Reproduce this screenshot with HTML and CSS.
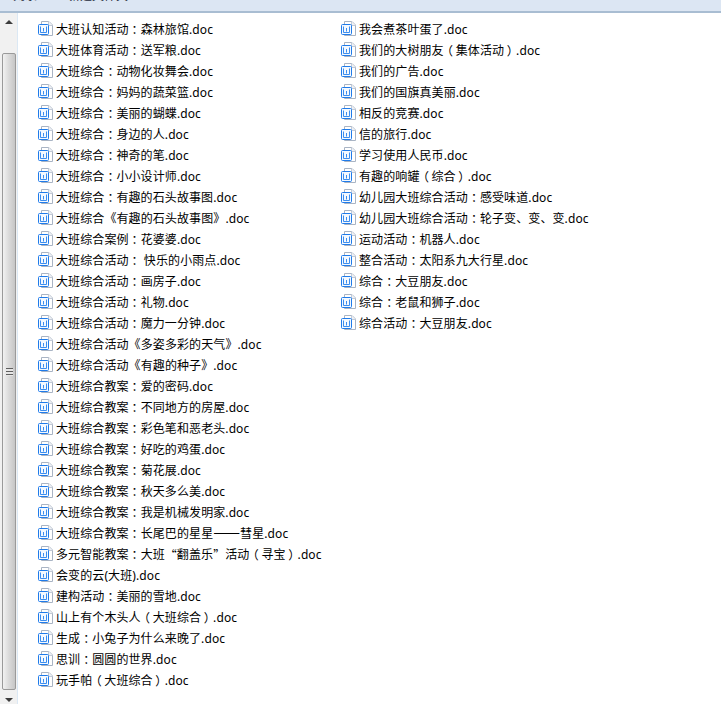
FILE: index.html
```html
<!DOCTYPE html>
<html lang="zh-CN">
<head>
<meta charset="utf-8">
<title>文件列表</title>
<link rel="stylesheet" href="styles.css">
</head>
<body>
<svg class="defs" width="0" height="0" aria-hidden="true">
  <symbol id="doc" viewBox="0 0 15 15">
    <path d="M3.5 .5H11L14.5 4V14.5H3.5Z" fill="#fff" stroke="#a9b4c4"/>
    <path d="M10.5 .5V4.5H14.5" fill="#eef1f6" stroke="#c3cad6"/>
    <rect x=".5" y="3.5" width="10" height="10" rx="1" fill="#f4f9ff" stroke="#1f7bea"/>
    <path d="M2.5 5.5V11.5H8.5V5.5M5.5 7V10.5" fill="none" stroke="#3b8def"/>
  </symbol>
</svg>
<header class="toolbar">
  <span class="tool first">刻录</span>
  <span class="tool">新建文件夹</span>
</header>
<main class="pane">
  <aside class="scrollbar">
    <div class="arrow up"></div>
    <div class="thumb"><div class="grip"></div></div>
    <div class="arrow down"></div>
  </aside>
  <ul class="files">
    <li><svg class="icon"><use href="#doc"/></svg>大班认知活动<span class="p">：</span>森林旅馆.doc</li>
    <li><svg class="icon"><use href="#doc"/></svg>大班体育活动<span class="p">：</span>送军粮.doc</li>
    <li><svg class="icon"><use href="#doc"/></svg>大班综合<span class="p">：</span>动物化妆舞会.doc</li>
    <li><svg class="icon"><use href="#doc"/></svg>大班综合<span class="p">：</span>妈妈的蔬菜篮.doc</li>
    <li><svg class="icon"><use href="#doc"/></svg>大班综合<span class="p">：</span>美丽的蝴蝶.doc</li>
    <li><svg class="icon"><use href="#doc"/></svg>大班综合<span class="p">：</span>身边的人.doc</li>
    <li><svg class="icon"><use href="#doc"/></svg>大班综合<span class="p">：</span>神奇的笔.doc</li>
    <li><svg class="icon"><use href="#doc"/></svg>大班综合<span class="p">：</span>小小设计师.doc</li>
    <li><svg class="icon"><use href="#doc"/></svg>大班综合<span class="p">：</span>有趣的石头故事图.doc</li>
    <li><svg class="icon"><use href="#doc"/></svg>大班综合《有趣的石头故事图》.doc</li>
    <li><svg class="icon"><use href="#doc"/></svg>大班综合案例<span class="p">：</span>花婆婆.doc</li>
    <li><svg class="icon"><use href="#doc"/></svg>大班综合活动<span class="p">：</span> 快乐的小雨点.doc</li>
    <li><svg class="icon"><use href="#doc"/></svg>大班综合活动<span class="p">：</span>画房子.doc</li>
    <li><svg class="icon"><use href="#doc"/></svg>大班综合活动<span class="p">：</span>礼物.doc</li>
    <li><svg class="icon"><use href="#doc"/></svg>大班综合活动<span class="p">：</span>魔力一分钟.doc</li>
    <li><svg class="icon"><use href="#doc"/></svg>大班综合活动《多姿多彩的天气》.doc</li>
    <li><svg class="icon"><use href="#doc"/></svg>大班综合活动《有趣的种子》.doc</li>
    <li><svg class="icon"><use href="#doc"/></svg>大班综合教案<span class="p">：</span>爱的密码.doc</li>
    <li><svg class="icon"><use href="#doc"/></svg>大班综合教案<span class="p">：</span>不同地方的房屋.doc</li>
    <li><svg class="icon"><use href="#doc"/></svg>大班综合教案<span class="p">：</span>彩色笔和恶老头.doc</li>
    <li><svg class="icon"><use href="#doc"/></svg>大班综合教案<span class="p">：</span>好吃的鸡蛋.doc</li>
    <li><svg class="icon"><use href="#doc"/></svg>大班综合教案<span class="p">：</span>菊花展.doc</li>
    <li><svg class="icon"><use href="#doc"/></svg>大班综合教案<span class="p">：</span>秋天多么美.doc</li>
    <li><svg class="icon"><use href="#doc"/></svg>大班综合教案<span class="p">：</span>我是机械发明家.doc</li>
    <li><svg class="icon"><use href="#doc"/></svg>大班综合教案<span class="p">：</span>长尾巴的星星<span class="dash">——</span>彗星.doc</li>
    <li><svg class="icon"><use href="#doc"/></svg>多元智能教案<span class="p">：</span>大班<span class="p">“</span>翻盖乐<span class="p">”</span>活动<span class="b">（</span>寻宝<span class="b">）</span>.doc</li>
    <li><svg class="icon"><use href="#doc"/></svg>会变的云(大班).doc</li>
    <li><svg class="icon"><use href="#doc"/></svg>建构活动<span class="p">：</span>美丽的雪地.doc</li>
    <li><svg class="icon"><use href="#doc"/></svg>山上有个木头人<span class="b">（</span>大班综合<span class="b">）</span>.doc</li>
    <li><svg class="icon"><use href="#doc"/></svg>生成<span class="p">：</span>小兔子为什么来晚了.doc</li>
    <li><svg class="icon"><use href="#doc"/></svg>思训<span class="p">：</span>圆圆的世界.doc</li>
    <li><svg class="icon"><use href="#doc"/></svg>玩手帕<span class="b">（</span>大班综合<span class="b">）</span>.doc</li>
    <li><svg class="icon"><use href="#doc"/></svg>我会煮茶叶蛋了.doc</li>
    <li><svg class="icon"><use href="#doc"/></svg>我们的大树朋友<span class="b">（</span>集体活动<span class="b">）</span>.doc</li>
    <li><svg class="icon"><use href="#doc"/></svg>我们的广告.doc</li>
    <li><svg class="icon"><use href="#doc"/></svg>我们的国旗真美丽.doc</li>
    <li><svg class="icon"><use href="#doc"/></svg>相反的竞赛.doc</li>
    <li><svg class="icon"><use href="#doc"/></svg>信的旅行.doc</li>
    <li><svg class="icon"><use href="#doc"/></svg>学习使用人民币.doc</li>
    <li><svg class="icon"><use href="#doc"/></svg>有趣的响罐<span class="b">（</span>综合<span class="b">）</span>.doc</li>
    <li><svg class="icon"><use href="#doc"/></svg>幼儿园大班综合活动<span class="p">：</span>感受味道.doc</li>
    <li><svg class="icon"><use href="#doc"/></svg>幼儿园大班综合活动<span class="p">：</span>轮子变、变、变.doc</li>
    <li><svg class="icon"><use href="#doc"/></svg>运动活动<span class="p">：</span>机器人.doc</li>
    <li><svg class="icon"><use href="#doc"/></svg>整合活动<span class="p">：</span>太阳系九大行星.doc</li>
    <li><svg class="icon"><use href="#doc"/></svg>综合<span class="p">：</span>大豆朋友.doc</li>
    <li><svg class="icon"><use href="#doc"/></svg>综合<span class="p">：</span>老鼠和狮子.doc</li>
    <li><svg class="icon"><use href="#doc"/></svg>综合活动<span class="p">：</span>大豆朋友.doc</li>
  </ul>
</main>
</body>
</html>
```
FILE: styles.css
```css
html, body {
  margin: 0;
  padding: 0;
  height: 704px;
  overflow: hidden;
  background: #fff;
  font-family: "Noto Sans", "Noto Sans CJK SC", sans-serif;
  font-size: 12px;
  color: #000;
}
.defs { display: block; height: 0; }

.toolbar {
  display: flex;
  height: 11px;
  overflow: hidden;
  background: #dce6f3;
  border-bottom: 2px solid #a9bdd2;
  box-sizing: content-box;
  line-height: 14px;
  color: #1e2a3a;
}
.tool { margin-top: -11px; margin-left: 31px; height: 14px; }
.tool.first { margin-left: 13px; }

.pane { display: flex; height: 691px; }

.scrollbar {
  width: 18px;
  flex: none;
  display: flex;
  flex-direction: column;
  box-sizing: border-box;
  background: #f1f1f1;
  border-right: 1px solid #dbe8f4;
}
.arrow {
  height: 40px;
  flex: none;
  display: flex;
  justify-content: center;
  position: relative;
}
.arrow::after {
  content: "";
  width: 0;
  height: 0;
  border-left: 4px solid transparent;
  border-right: 4px solid transparent;
}
.arrow.up::after { border-bottom: 4px solid #3c3c3c; margin-top: 7px; }
.arrow.down { height: 14px; }
.arrow.down::after { border-top: 4px solid #3c3c3c; margin-top: 8px; }
.thumb {
  flex: 1;
  margin: 0 1px 0 2px;
  border: 1px solid #9a9a9a;
  border-radius: 2px;
  background: linear-gradient(to right, #f2f2f2, #dcdcdc 45%, #c6c6c6);
  display: flex;
  align-items: center;
  justify-content: center;
}
.grip {
  width: 7px;
  height: 8px;
  background: repeating-linear-gradient(to bottom, #5f5f5f 0, #5f5f5f 1px, #e6e6e6 1px, #e6e6e6 3px);
}

.files {
  list-style: none;
  margin: 0;
  padding: 5px 0 0 20px;
  display: grid;
  grid-auto-flow: column;
  grid-template-rows: repeat(32, 21px);
  grid-auto-columns: 303px;
  align-content: start;
}
.files li {
  display: flex;
  align-items: center;
  box-sizing: border-box;
  padding-top: 2px;
  white-space: pre;
  line-height: 21px;
  letter-spacing: .1px;
}
.icon { width: 15px; height: 15px; flex: none; margin: -2px 3px 0 0; }
.p { font-family: "Noto Sans CJK TC", sans-serif; letter-spacing: 0; }
.b {
  width: 12px;
  text-align: center;
  letter-spacing: 0;
  font-family: "Noto Sans CJK TC", sans-serif;
  font-feature-settings: "palt";
}
.dash {
  letter-spacing: 0;
  font-family: "Noto Sans CJK TC", sans-serif;
  font-size: 16px;
  line-height: 21px;
  margin-bottom: 4px;
}
```
